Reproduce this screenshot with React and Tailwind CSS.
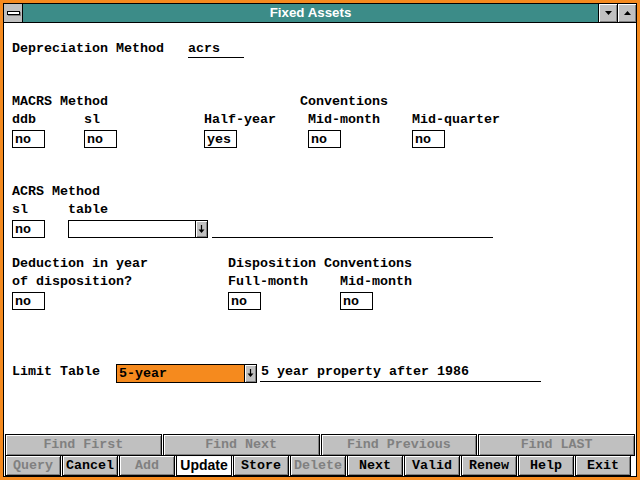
import React from "react";

const frame = "bg-[#f58a1e]";
const teal = "bg-[#3c8c88]";
const bevel = "shadow-[inset_1px_1px_0_#ffffff,inset_-1px_-1px_0_#808080]";

const Box = ({ children }) => (
  <div className="w-[33px] h-[18px] border border-black bg-white pl-[2px] leading-[17px]">
    {children}
  </div>
);

const DownArrow = () => (
  <svg width="7" height="9" viewBox="0 0 7 9">
    <path d="M3.5 0v5" stroke="#000" strokeWidth="1.2" />
    <path d="M0.5 4.5h6l-3 3.5z" fill="#000" />
  </svg>
);

const Drop = ({ className, children }) => (
  <div className={`flex h-[18px] border border-black ${className}`}>
    <div className="flex-1 pl-[2px] leading-[17px] overflow-hidden">{children}</div>
    <div className={`w-[12px] border-l border-black bg-[#c0c0c0] flex items-center justify-center ${bevel}`}>
      <DownArrow />
    </div>
  </div>
);

const Btn = ({ children, disabled, className = "" }) => (
  <div
    className={`h-full border border-black flex items-center justify-center ${
      disabled ? "text-[#808080]" : "text-black"
    } ${className || `bg-[#c0c0c0] ${bevel}`}`}
  >
    {children}
  </div>
);

const TitleBar = () => (
  <div className={`h-[19px] flex border-b border-black ${teal}`}>
    <div className="w-[19px] border-r border-black bg-[#c0c0c0] flex items-center justify-center">
      <div className="relative w-[13px] h-[4px]">
        <div className="absolute left-[1px] top-[1px] w-[13px] h-[4px] bg-[#808080]" />
        <div className="absolute left-0 top-0 w-[13px] h-[4px] bg-white border border-black" />
      </div>
    </div>
    <div className="flex-1 flex items-center justify-center text-white font-bold text-[13.33px] font-['Liberation_Sans',Arial,sans-serif]">
      Fixed Assets
    </div>
    <div className={`w-[19px] border-l border-black bg-[#c0c0c0] flex items-center justify-center ${bevel}`}>
      <svg width="7" height="4" viewBox="0 0 7 4">
        <path d="M0 0h7l-3.5 4z" fill="#000" />
      </svg>
    </div>
    <div className={`w-[19px] border-l border-black bg-[#c0c0c0] flex items-center justify-center ${bevel}`}>
      <svg width="7" height="4" viewBox="0 0 7 4">
        <path d="M0 4h7l-3.5-4z" fill="#000" />
      </svg>
    </div>
  </div>
);

export default function App() {
  return (
    <div className={`w-[640px] h-[480px] p-[3px] ${frame}`}>
      <div className="w-full h-full border border-black bg-white flex flex-col">
        <TitleBar />
        <div className="flex-1 flex flex-col font-['Liberation_Mono',monospace] font-bold text-[13.33px] text-black">
          <div className="pl-2 pt-[17px] flex flex-col leading-[18px]">
            <div className="flex items-start">
              <span className="w-[176px]">Depreciation Method</span>
              <span className="w-[56px] h-[18px] border-b border-black">acrs</span>
            </div>

            <div className="flex mt-[35px] h-[18px]">
              <span className="w-[288px]">MACRS Method</span>
              <span>Conventions</span>
            </div>
            <div className="flex h-[18px]">
              <span className="w-[72px]">ddb</span>
              <span className="w-[120px]">sl</span>
              <span className="w-[104px]">Half-year</span>
              <span className="w-[104px]">Mid-month</span>
              <span>Mid-quarter</span>
            </div>
            <div className="flex mt-[1px]">
              <div className="w-[72px]"><Box>no</Box></div>
              <div className="w-[120px]"><Box>no</Box></div>
              <div className="w-[104px]"><Box>yes</Box></div>
              <div className="w-[104px]"><Box>no</Box></div>
              <div><Box>no</Box></div>
            </div>

            <div className="flex mt-[35px] h-[18px]">
              <span>ACRS Method</span>
            </div>
            <div className="flex h-[18px]">
              <span className="w-[56px]">sl</span>
              <span>table</span>
            </div>
            <div className="flex mt-[1px] items-start">
              <div className="w-[56px]"><Box>no</Box></div>
              <Drop className="w-[140px] bg-white" />
              <div className="ml-[4px] w-[281px] h-[18px] border-b border-black" />
            </div>

            <div className="flex mt-[17px] h-[18px]">
              <span className="w-[216px]">Deduction in year</span>
              <span>Disposition Conventions</span>
            </div>
            <div className="flex h-[18px]">
              <span className="w-[216px]">of disposition?</span>
              <span className="w-[112px]">Full-month</span>
              <span>Mid-month</span>
            </div>
            <div className="flex mt-[1px]">
              <div className="w-[216px]"><Box>no</Box></div>
              <div className="w-[112px]"><Box>no</Box></div>
              <div><Box>no</Box></div>
            </div>

            <div className="flex mt-[54px] items-start">
              <span className="w-[104px] leading-[16px]">Limit Table</span>
              <Drop className={`w-[141px] h-[19px] ${frame}`}>5-year</Drop>
              <div className="ml-[3px] w-[281px] h-[18px] border-b border-black pl-[1px] leading-[16px]">
                5 year property after 1986
              </div>
            </div>
          </div>

          <div className="mt-auto flex flex-col gap-[2px]">
            <div className="h-[19px] px-[1px] grid grid-cols-4 gap-[1px]">
              <Btn disabled>Find First</Btn>
              <Btn disabled>Find Next</Btn>
              <Btn disabled>Find Previous</Btn>
              <Btn disabled>Find LAST</Btn>
            </div>
            <div className="h-[21px] pl-[1px] flex gap-[1px]">
              {[
                ["Query", true],
                ["Cancel", false],
                ["Add", true],
                ["Update", false, true],
                ["Store", false],
                ["Delete", true],
                ["Next", false],
                ["Valid", false],
                ["Renew", false],
                ["Help", false],
                ["Exit", false],
              ].map(([label, dis, focus]) => (
                <div key={label} className="w-[56px] h-full">
                  {focus ? (
                    <Btn className="bg-white font-['Liberation_Sans',Arial,sans-serif] text-[14px]">{label}</Btn>
                  ) : (
                    <Btn disabled={dis}>{label}</Btn>
                  )}
                </div>
              ))}
            </div>
          </div>
        </div>
      </div>
    </div>
  );
}
